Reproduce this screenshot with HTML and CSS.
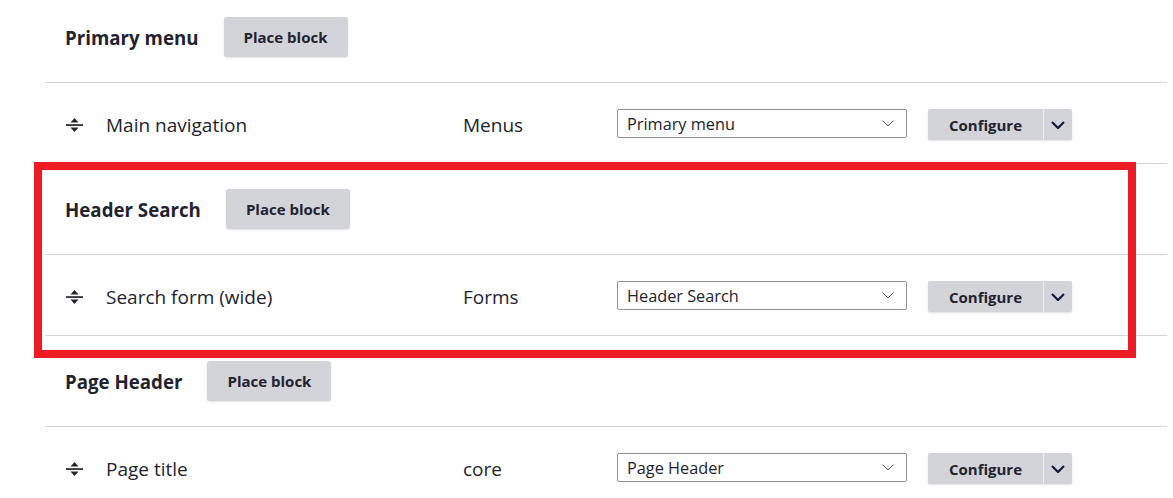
FILE: index.html
```html
<!DOCTYPE html>
<html lang="en">
<head>
<meta charset="utf-8">
<title>Block layout</title>
<link rel="stylesheet" href="styles.css">
</head>
<body>
<div class="layout">
  <div class="region-row">
    <h3 class="region-title">Primary menu</h3>
    <button class="place-btn">Place block</button>
  </div>
  <div class="block-row">
    <div class="cell-name">
      <svg class="drag" viewBox="0 0 17 16" width="17" height="16"><polygon points="8.5,1 12.5,5.5 4.5,5.5" fill="#222330"/><rect x="0" y="7.2" width="17" height="1.7" fill="#222330"/><polygon points="4.5,10.5 12.5,10.5 8.5,15" fill="#222330"/></svg>
      <span>Main navigation</span>
    </div>
    <div class="cell-cat">Menus</div>
    <div class="cell-region">
      <div class="select"><span>Primary menu</span><svg class="sel-chev" viewBox="0 0 12 7" width="12" height="7"><polyline points="0.5,0.5 6,6 11.5,0.5" fill="none" stroke="#55565e" stroke-width="1"/></svg></div>
    </div>
    <div class="cell-ops">
      <div class="dropbutton"><span class="db-main">Configure</span><span class="db-toggle"><svg viewBox="0 0 14 8" width="14" height="8"><polyline points="1,1 7,7 13,1" fill="none" stroke="#151a3b" stroke-width="2.2"/></svg></span></div>
    </div>
  </div>

  <div class="region-row">
    <h3 class="region-title">Header Search</h3>
    <button class="place-btn">Place block</button>
  </div>
  <div class="block-row">
    <div class="cell-name">
      <svg class="drag" viewBox="0 0 17 16" width="17" height="16"><polygon points="8.5,1 12.5,5.5 4.5,5.5" fill="#222330"/><rect x="0" y="7.2" width="17" height="1.7" fill="#222330"/><polygon points="4.5,10.5 12.5,10.5 8.5,15" fill="#222330"/></svg>
      <span>Search form (wide)</span>
    </div>
    <div class="cell-cat">Forms</div>
    <div class="cell-region">
      <div class="select"><span>Header Search</span><svg class="sel-chev" viewBox="0 0 12 7" width="12" height="7"><polyline points="0.5,0.5 6,6 11.5,0.5" fill="none" stroke="#55565e" stroke-width="1"/></svg></div>
    </div>
    <div class="cell-ops">
      <div class="dropbutton"><span class="db-main">Configure</span><span class="db-toggle"><svg viewBox="0 0 14 8" width="14" height="8"><polyline points="1,1 7,7 13,1" fill="none" stroke="#151a3b" stroke-width="2.2"/></svg></span></div>
    </div>
  </div>

  <div class="region-row">
    <h3 class="region-title">Page Header</h3>
    <button class="place-btn">Place block</button>
  </div>
  <div class="block-row">
    <div class="cell-name">
      <svg class="drag" viewBox="0 0 17 16" width="17" height="16"><polygon points="8.5,1 12.5,5.5 4.5,5.5" fill="#222330"/><rect x="0" y="7.2" width="17" height="1.7" fill="#222330"/><polygon points="4.5,10.5 12.5,10.5 8.5,15" fill="#222330"/></svg>
      <span>Page title</span>
    </div>
    <div class="cell-cat">core</div>
    <div class="cell-region">
      <div class="select"><span>Page Header</span><svg class="sel-chev" viewBox="0 0 12 7" width="12" height="7"><polyline points="0.5,0.5 6,6 11.5,0.5" fill="none" stroke="#55565e" stroke-width="1"/></svg></div>
    </div>
    <div class="cell-ops">
      <div class="dropbutton"><span class="db-main">Configure</span><span class="db-toggle"><svg viewBox="0 0 14 8" width="14" height="8"><polyline points="1,1 7,7 13,1" fill="none" stroke="#151a3b" stroke-width="2.2"/></svg></span></div>
    </div>
  </div>

  <div class="highlight"></div>
</div>
</body>
</html>
```
FILE: styles.css
```css
* { box-sizing: border-box; }
html, body { margin: 0; padding: 0; background: #fff; }
body {
  font-family: "Open Sans", "Noto Sans", sans-serif;
  color: #222330;
  overflow: hidden;
}
.layout {
  position: relative;
  margin: -8px 6px 0 45px;
}
.region-row {
  display: flex;
  align-items: center;
  gap: 25px;
  height: 91px;
  padding-left: 20px;
  border-bottom: 1px solid #d3d4d9;
}
.region-title {
  margin: 0;
  font-size: 18.7px;
  font-weight: 700;
  color: #222330;
}
.place-btn {
  height: 40px;
  width: 124px;
  border: 0;
  border-radius: 3px;
  background: #d3d4d9;
  box-shadow: 0 1px 2px rgba(0,0,0,0.12);
  font-family: inherit;
  font-size: 15px;
  font-weight: 700;
  color: #222330;
  padding: 0;
}
.block-row {
  display: grid;
  grid-template-columns: 418px 154px 311px auto;
  align-items: center;
  height: 81px;
  border-bottom: 1px solid #d3d4d9;
  font-size: 19px;
}
.cell-name {
  display: flex;
  align-items: center;
  padding-left: 21px;
  padding-top: 3px;
  gap: 23px;
}
.cell-cat { padding-top: 3px; }
.drag { display: block; }
.select {
  display: flex;
  align-items: center;
  justify-content: space-between;
  width: 290px;
  height: 29px;
  border: 1px solid #8e929c;
  border-radius: 2px;
  padding: 2px 12px 0 9px;
  font-size: 16.3px;
}
.sel-chev { display: block; margin-top: -2px; }
.cell-ops { padding-top: 3px; }
.dropbutton {
  display: flex;
  width: 144px;
  height: 31px;
  background: #d3d4d9;
  border-radius: 2px;
  box-shadow: 0 1px 2px rgba(0,0,0,0.12);
  font-size: 15px;
  font-weight: 700;
}
.db-main {
  flex: 1;
  display: flex;
  align-items: center;
  justify-content: center;
}
.db-toggle {
  width: 29px;
  display: flex;
  align-items: center;
  justify-content: center;
  border-left: 1px solid #eceef2;
}
.db-toggle svg { display: block; }
.highlight {
  position: absolute;
  left: -11px;
  top: 170px;
  width: 1102px;
  height: 196px;
  border: 8px solid #ed1c24;
  pointer-events: none;
}
```
